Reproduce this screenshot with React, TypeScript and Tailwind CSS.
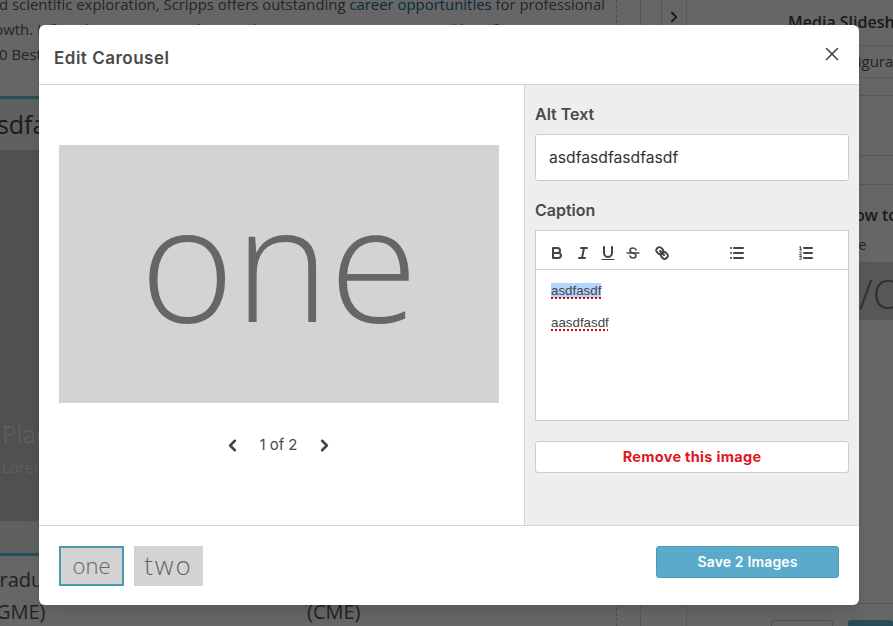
import { ChevronLeft, ChevronRight, X } from 'lucide-react';

const ui = "font-['Inter','Liberation_Sans',sans-serif]";
const page = "font-['Open_Sans','Liberation_Sans',sans-serif]";

function QuillIcon({ children, className = '' }: { children: React.ReactNode; className?: string }) {
  return (
    <svg viewBox="0 0 18 18" className={`h-[18px] w-[18px] shrink-0 fill-none stroke-[#444] stroke-2 ${className}`} strokeLinecap="round" strokeLinejoin="round">
      {children}
    </svg>
  );
}

function Toolbar() {
  return (
    <div className="flex h-[39px] items-center border-b border-[#ccc] pl-[12px] pt-[5px]">
      <QuillIcon>
        <path d="M5,4H9.5A2.5,2.5,0,0,1,12,6.5v0A2.5,2.5,0,0,1,9.5,9H5V4Z" />
        <path d="M5,9h5.5A2.5,2.5,0,0,1,13,11.5v0A2.5,2.5,0,0,1,10.5,14H5V9Z" />
      </QuillIcon>
      <QuillIcon className="ml-[8px]">
        <path d="M7 4H13M5 14H11M8 14L10 4" />
      </QuillIcon>
      <QuillIcon className="ml-[7px]">
        <path d="M5,3V9a4,4,0,0,0,4,4h0a4,4,0,0,0,4-4V3" />
        <path d="M3 15.5H15" strokeWidth="1" />
      </QuillIcon>
      <QuillIcon className="ml-[7px]">
        <path d="M12,6C11.6,4.8 10.5,4 9,4 7.3,4 6,5 6,6.4 6,7.6 7,8.4 9,9 11,9.6 12,10.4 12,11.6 12,13 10.7,14 9,14 7.5,14 6.4,13.2 6,12" strokeWidth="1.6" />
        <path d="M3 9H15" strokeWidth="1.4" />
      </QuillIcon>
      <QuillIcon className="ml-[11px]">
        <path d="M7 7L11 11" />
        <path d="M8.9,4.577a3.476,3.476,0,0,1,.36,4.679A3.476,3.476,0,0,1,4.577,8.9C3.185,7.5,2.035,6.4,4.217,4.217S7.5,3.185,8.9,4.577Z" />
        <path d="M13.423,9.1a3.476,3.476,0,0,0-4.679-.36,3.476,3.476,0,0,0,.36,4.679c1.392,1.392,2.5,2.542,4.679.36S14.815,10.5,13.423,9.1Z" />
      </QuillIcon>
      <QuillIcon className="ml-[57px]">
        <path d="M6 4H15M6 9H15M6 14H15M3 4H3.01M3 9H3.01M3 14H3.01" />
      </QuillIcon>
      <QuillIcon className="ml-[51px]">
        <path d="M7 4H15M7 9H15M7 14H15" />
        <path d="M2.6 3L3.6 2.5V5.8M2.6 5.8H4.6M2.6 8.2C3.4 7.4 4.6 7.8 4.4 8.7 4.3 9.4 3 10 2.6 11H4.6M2.6 12.6H4.6L3.6 13.9C4.8 13.9 4.8 15.6 3.5 15.6 3.1 15.6 2.8 15.5 2.6 15.3" strokeWidth="1" />
      </QuillIcon>
    </div>
  );
}

function Modal() {
  return (
    <div className={`absolute left-[39px] top-[25px] flex h-[580px] w-[820px] flex-col overflow-hidden rounded-md bg-white text-[#4a4a4a] shadow-lg ${ui}`}>
      <div className="flex h-[60px] shrink-0 items-center justify-between border-b border-[#d4d4d4] pl-[15px] pr-[16px]">
        <h2 className="pt-[9px] text-[17px] font-semibold tracking-[0.5px] text-[#4a4a4a]">Edit Carousel</h2>
        <X size={22} strokeWidth={1.7} className="mt-[-1px] text-[#444]" />
      </div>

      <div className="flex h-[440px] shrink-0">
        <div className="flex w-[486px] shrink-0 flex-col border-r border-[#d4d4d4] pl-[20px] pt-[60px]">
          <div className={`flex h-[258px] w-[440px] items-center justify-center bg-[#d3d3d3] pb-[30px] text-[161px] font-light leading-none text-[#666] ${page}`}>one</div>
          <div className="mt-[31px] flex w-[439px] items-center justify-center text-[#4a4a4a]">
            <ChevronLeft size={19} strokeWidth={3.2} className="text-[#444]" />
            <span className="mx-[18px] text-[15px] tracking-[-0.05px]">1 of 2</span>
            <ChevronRight size={19} strokeWidth={3.2} className="text-[#444]" />
          </div>
        </div>

        <div className="flex-1 bg-[#eee] px-[10px] pt-[19px]">
          <label className="block h-[20px] text-[16px] font-semibold leading-[20px]">Alt Text</label>
          <div className="mt-[10px] flex h-[47px] items-center rounded-[3px] border border-[#ccc] bg-white pl-[13px] text-[15.7px] text-[#333]">asdfasdfasdfasdf</div>
          <label className="mt-[19px] block h-[20px] text-[16px] font-semibold leading-[20px]">Caption</label>
          <div className="mt-[10px] h-[191px] border border-[#ccc] bg-white">
            <Toolbar />
            <div className="pl-[15px] pt-[12px] font-['Liberation_Sans',sans-serif] text-[13.33px] leading-[18px] text-[#444]">
              <p>
                <span className="bg-[#b3d4fd] underline decoration-[#e00000] decoration-dotted decoration-2 underline-offset-2">asdfasdf</span>
              </p>
              <p className="mt-[14px]">
                <span className="underline decoration-[#e00000] decoration-dotted decoration-2 underline-offset-2">aasdfasdf</span>
              </p>
            </div>
          </div>
          <button className="mt-[20px] h-[32px] w-full rounded-[3px] border border-[#ccc] bg-white text-[14.5px] font-bold tracking-[0.3px] text-[#e0161f]">Remove this image</button>
        </div>
      </div>

      <div className="flex flex-1 items-start justify-between border-t border-[#d4d4d4] pl-[20px] pr-[20px] pt-[20px]">
        <div className={`flex gap-[10px] font-light text-[#666] ${page}`}>
          <div className="flex h-[40px] w-[65px] items-center justify-center border-2 border-[#4b98b2] bg-[#d3d3d3] pb-[2px] text-[22px]">one</div>
          <div className="flex h-[40px] w-[69px] items-center justify-center bg-[#d3d3d3] pb-[1px] text-[26px] tracking-[2px]">two</div>
        </div>
        <button className="h-[32px] w-[183px] rounded-[3px] border border-[#4f9ab8] bg-[#5aabcb] pb-[2px] text-[14px] font-semibold tracking-[0.15px] text-white">Save 2 Images</button>
      </div>
    </div>
  );
}

function PageBehind() {
  return (
    <div className={`flex h-[626px] w-[893px] overflow-hidden bg-white text-[#5c5c5c] ${page}`}>
      <div className="w-[617px] shrink-0 border-r border-dashed border-[#c4c4c4]">
        <div className="-mt-[8px] flex h-[25px] w-[605px] items-center justify-end whitespace-nowrap text-[14.9px]">
          <span>
            and scientific exploration, Scripps offers outstanding <span className="text-[#0f6e8c]">career opportunities</span> for professional
          </span>
        </div>
        <p className="-ml-[20px] h-[25px] whitespace-nowrap text-[14.9px] leading-[25px]">growth. Infact the organization has made Fortune magazine's annual list of America's</p>
        <p className="-ml-[18px] h-[25px] whitespace-nowrap text-[14.9px] leading-[25px]">100 Best Companies to Work For</p>
        <div className="mt-[29px] h-[3px] bg-[#61c0dc]" />
        <div className="flex h-[51px] items-center overflow-hidden whitespace-nowrap bg-[#f0f0f0] text-[25px] text-[#444]">
          <span className="-ml-[17px]">asdfasdf</span>
        </div>
        <div className="h-[371px] bg-[#c8c8c8] pl-[2px] pt-[268px] text-white/60">
          <p className="whitespace-nowrap text-[24px] leading-[32px]">Placeholder</p>
          <p className="mt-[7px] whitespace-nowrap text-[15px] leading-[20px]">Lorem ipsum</p>
        </div>
        <div className="h-[32px] bg-[#f0f0f0]" />
        <div className="h-[3px] bg-[#61c0dc]" />
        <div className="flex overflow-hidden whitespace-nowrap pt-[8px] text-[20px] leading-[32px] text-[#555]">
          <div className="w-[307px] shrink-0">
            <p className="-ml-[15px]">Graduate</p>
            <p className="-ml-[10px]">(GME)</p>
          </div>
          <div className="pt-[32px]">(CME)</div>
        </div>
      </div>

      <div className="w-[24px] shrink-0 border-r border-[#ddd]" />

      <div className="w-[46px] shrink-0 border-r border-[#ddd]">
        <div className="-mt-px ml-[20px] flex h-[34px] w-[25px] items-center justify-center rounded-tl border-l border-t border-[#ccc]">
          <ChevronRight size={18} strokeWidth={2.5} className="text-[#444]" />
        </div>
      </div>

      <div className="min-w-0 flex-1 whitespace-nowrap">
        <p className="pl-[101px] pt-[12px] text-[16px] font-semibold leading-[20px] text-[#444]">Media Slideshow</p>
        <div className="mt-[13px] h-[33px] border-y border-[#ddd] pl-[138px] text-[15px] leading-[30px]">Configuration</div>
        <div className="mt-[17px] h-[61px] border-y border-[#ddd]" />
        <div className="h-[29px] border-b border-[#ddd]" />
        <p className="pl-[156px] pt-[20px] text-[16px] font-semibold leading-[20px] text-[#444]">How to</p>
        <p className="pl-[118px] pt-[11px] text-[14px] leading-[18px]">Title here</p>
        <div className="mt-[8px] h-[58px] overflow-hidden bg-[#dcdcdc] pl-[172px] pt-[3px] text-[40px] font-light leading-[58px] text-[#777]">
          /O
        </div>
        <div className="mt-[283px] border-t border-[#ddd] pl-[84px] pt-[16px]">
          <div className="flex gap-[15px]">
            <div className="h-[30px] w-[83px] rounded-[3px] border border-[#ccc]" />
            <div className="h-[30px] w-[60px] rounded-[3px] bg-[#61c0dc]" />
          </div>
        </div>
      </div>
    </div>
  );
}

export default function App() {
  return (
    <div className="relative h-[626px] w-[893px] overflow-hidden">
      <PageBehind />
      <div className="absolute inset-0 bg-black/60" />
      <Modal />
    </div>
  );
}
